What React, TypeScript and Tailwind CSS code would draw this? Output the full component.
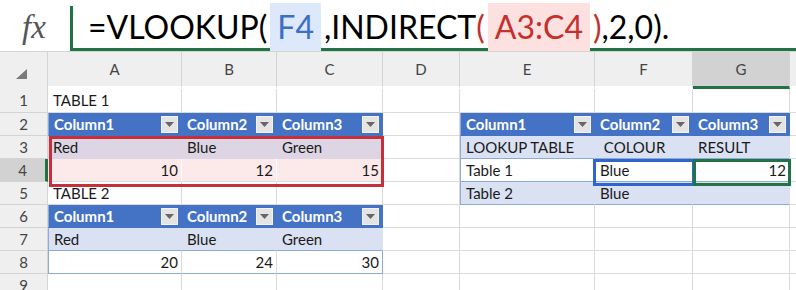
import React from 'react';

const COLS = ['A', 'B', 'C', 'D', 'E', 'F', 'G', ''];

type Cell = { t?: string; r?: boolean; c?: string };

const hdr = 'bg-[#4472c4] text-white font-bold border-b-[#4472c4] border-r-[#4472c4]';
const band = 'bg-[#d9e1f2] border-b-[#8eaadb] border-r-[#d9e1f2]';
const plainT = 'bg-white border-b-[#8eaadb]';
const tint3 = 'bg-[#ddd5e4] border-r-[#ddd5e4] border-b-[#ddd5e4]';
const tint4 = 'bg-[#fce9e9] border-r-white';
const edgeL = 'border-l border-l-[#8eaadb]';
const edgeR = 'border-r-[#8eaadb]';

const ROWS: Cell[][] = [
  [{ t: 'TABLE 1' }],
  [
    { t: 'Column1', c: `${hdr} ${edgeL}` },
    { t: 'Column2', c: hdr },
    { t: 'Column3', c: `${hdr} ${edgeR}` },
    {},
    { t: 'Column1', c: `${hdr} ${edgeL}` },
    { t: 'Column2', c: hdr },
    { t: 'Column3', c: `${hdr} ${edgeR}` },
  ],
  [
    { t: 'Red', c: tint3 },
    { t: 'Blue', c: tint3 },
    { t: 'Green', c: tint3 },
    {},
    { t: 'LOOKUP TABLE', c: `${band} ${edgeL}` },
    { t: '\u00a0COLOUR', c: band },
    { t: 'RESULT', c: `${band} ${edgeR}` },
  ],
  [
    { t: '10', r: true, c: tint4 },
    { t: '12', r: true, c: tint4 },
    { t: '15', r: true, c: tint4 },
    {},
    { t: 'Table 1', c: `${plainT} ${edgeL}` },
    { t: 'Blue', c: `${plainT} bg-[#e9eef8]` },
    { t: '12', r: true, c: `${plainT} ${edgeR}` },
  ],
  [
    { t: 'TABLE 2' },
    {},
    {},
    {},
    { t: 'Table 2', c: `${band} ${edgeL}` },
    { t: 'Blue', c: band },
    { c: `${band} ${edgeR}` },
  ],
  [
    { t: 'Column1', c: `${hdr} ${edgeL}` },
    { t: 'Column2', c: hdr },
    { t: 'Column3', c: `${hdr} ${edgeR}` },
  ],
  [
    { t: 'Red', c: `${band} ${edgeL}` },
    { t: 'Blue', c: band },
    { t: 'Green', c: `${band} ${edgeR}` },
  ],
  [
    { t: '20', r: true, c: `${plainT} ${edgeL}` },
    { t: '24', r: true, c: plainT },
    { t: '30', r: true, c: `${plainT} ${edgeR}` },
  ],
  [],
];

function FilterButton() {
  return (
    <span className="ml-auto flex h-[17px] w-[17px] shrink-0 items-center justify-center border border-[#f2f2f2] bg-[#e4e4e4]">
      <svg width="9" height="5" viewBox="0 0 9 5">
        <path d="M0 0h9L4.5 5z" fill="#666" />
      </svg>
    </span>
  );
}

function GridCell({ cell }: { cell: Cell }) {
  const isHdr = cell.c?.includes('bg-[#4472c4]');
  return (
    <div
      className={`flex items-center overflow-hidden whitespace-nowrap border-r border-b border-[#dadada] pl-[5px] pr-[3px] ${
        cell.r ? 'justify-end' : ''
      } ${cell.c ?? ''}`}
    >
      {cell.t}
      {isHdr && <FilterButton />}
    </div>
  );
}

export default function App() {
  return (
    <div
      className="h-[290px] w-[796px] overflow-hidden bg-white text-[15px] text-[#1a1a1a]"
      style={{ fontFamily: 'Lato, "Noto Sans", sans-serif' }}
    >
      {/* formula bar */}
      <div className="flex h-[51px]">
        <div className="flex w-[70px] items-start justify-center pt-[3px] pr-[2px]">
          <span
            className="text-[33px] italic text-[#555]"
            style={{ fontFamily: '"Liberation Serif", serif' }}
          >
            fx
          </span>
        </div>
        <div className="mt-[6px] flex flex-1 items-center border-b-[3px] border-l-[3px] border-[#217346] pl-[15px] pb-[1px] text-[32px] text-black">
          <span>=VLOOKUP(</span>
          <span className="mx-[3px] bg-[#dde8fa] px-[7px] text-[#3b6fc6]">F4</span>
          <span>,INDIRECT</span>
          <span className="text-[#c4302b]">(</span>
          <span className="mx-[3px] bg-[#fde0e0] px-[7px] text-[#c4302b]">A3:C4</span>
          <span className="text-[#c4302b]">)</span>
          <span>,2,0).</span>
        </div>
      </div>

      {/* sheet */}
      <div className="relative">
        <div className="grid grid-cols-[48px_134px_95px_106px_77px_135px_98px_97px_1fr] grid-rows-[38px_24px_repeat(8,23px)]">
          <div className="flex items-end justify-end border-r border-t border-[#d4d4d4] bg-[#efefef] pb-[10px] pr-[20px]">
            <svg width="11" height="10" viewBox="0 0 11 10">
              <path d="M11 0V10H0z" fill="#7a7a7a" />
            </svg>
          </div>
          {COLS.map((c, i) => (
            <div
              key={i}
              className={`flex items-center justify-center border-t border-r border-[#d4d4d4] text-[#444] ${
                c === 'G' ? 'border-b-[3px] border-b-[#217346] bg-[#d2d2d2]' : 'border-b-[3px] border-b-white bg-[#efefef]'
              }`}
            >
              {c}
            </div>
          ))}
          {ROWS.map((row, ri) => (
            <React.Fragment key={ri}>
              <div
                className={`flex items-center justify-center border-b border-[#d4d4d4] text-[#444] ${
                  ri === 3
                    ? 'border-r-[3px] border-r-[#217346] bg-[#d2d2d2]'
                    : 'border-r border-r-[#d4d4d4] bg-[#efefef]'
                }`}
              >
                {ri + 1}
              </div>
              {COLS.map((_, ci) => (
                <GridCell key={ci} cell={row[ci] ?? {}} />
              ))}
            </React.Fragment>
          ))}
        </div>

        {/* selections */}
        <div className="pointer-events-none absolute left-[49px] top-[85px] h-[51px] w-[335px] border-[3px] border-[#c6303b]" />
        <div className="pointer-events-none absolute left-[593px] top-[108px] h-[27px] w-[102px] border-[3px] border-[#2f66c9]" />
        <div className="pointer-events-none absolute left-[693px] top-[108px] h-[27px] w-[98px] border-[3px] border-[#217346]" />
      </div>
    </div>
  );
}
